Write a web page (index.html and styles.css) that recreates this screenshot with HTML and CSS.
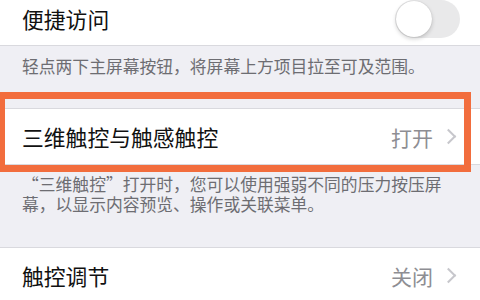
FILE: index.html
```html
<!DOCTYPE html>
<html lang="zh-CN">
<head>
  <meta charset="UTF-8">
  <title>辅助功能</title>
  <link rel="stylesheet" href="styles.css">
</head>
<body>

  <div class="cell cell-top">
    <span class="cell-title">便捷访问</span>
    <span class="switch"><span class="knob"></span></span>
  </div>
  <div class="footer footer-one">轻点两下主屏幕按钮，将屏幕上方项目拉至可及范围。</div>

  <div class="highlight">
    <div class="cell">
      <span class="cell-title">三维触控与触感触控</span>
      <span class="cell-value">打开</span>
      <span class="chevron"></span>
    </div>
  </div>
  <div class="footer footer-two">“三维触控”打开时，您可以使用强弱不同的压力按压屏<br>幕，以显示内容预览、操作或关联菜单。</div>

  <div class="cell">
    <span class="cell-title">触控调节</span>
    <span class="cell-value">关闭</span>
    <span class="chevron"></span>
  </div>

</body>
</html>
```

FILE: styles.css
```css
body {
  margin: 0;
  background-color: #efeff4;
  font-family: "Noto Sans CJK SC", "Noto Sans", sans-serif;
  overflow: hidden;
}

.cell {
  display: flex;
  align-items: center;
  height: 57px;
  padding: 0 22px;
  background-color: #fff;
  border-top: 1px solid #d9d9de;
  border-bottom: 1px solid #d9d9de;
  box-sizing: border-box;
}

.cell-top {
  height: 46px;
  padding-bottom: 9px;
  border-top: none;
}

.cell-title {
  flex: 1;
  font-size: 21.8px;
  color: #111;
}

.cell-value {
  font-size: 21px;
  color: #8e8e93;
  margin-right: 10px;
}

.chevron {
  width: 9px;
  height: 9px;
  border-top: 2px solid #c7c7cc;
  border-right: 2px solid #c7c7cc;
  transform: rotate(45deg);
  margin-right: 4px;
}

.switch {
  width: 65px;
  height: 38px;
  border-radius: 19px;
  background-color: #e9e9ea;
  margin-right: -2px;
  margin-top: 1px;
  display: flex;
  align-items: center;
  padding: 1px;
  box-sizing: border-box;
}

.knob {
  width: 36px;
  height: 36px;
  border-radius: 50%;
  background-color: #fff;
  box-shadow: 0 2px 4px rgba(0, 0, 0, 0.18), 0 0 1px rgba(0, 0, 0, 0.2);
}

.footer {
  padding-left: 22px;
  font-size: 16.8px;
  color: #6d6d72;
}

.footer-one {
  height: 62px;
  padding-top: 10px;
  line-height: 20px;
  box-sizing: border-box;
}

.footer-two {
  height: 82px;
  padding-top: 9px;
  line-height: 20px;
  box-sizing: border-box;
}

.highlight {
  position: relative;
}

.highlight::after {
  content: "";
  position: absolute;
  top: -16px;
  left: -2px;
  right: 9px;
  bottom: -7px;
  border: 7px solid #f26d3d;
}
```
